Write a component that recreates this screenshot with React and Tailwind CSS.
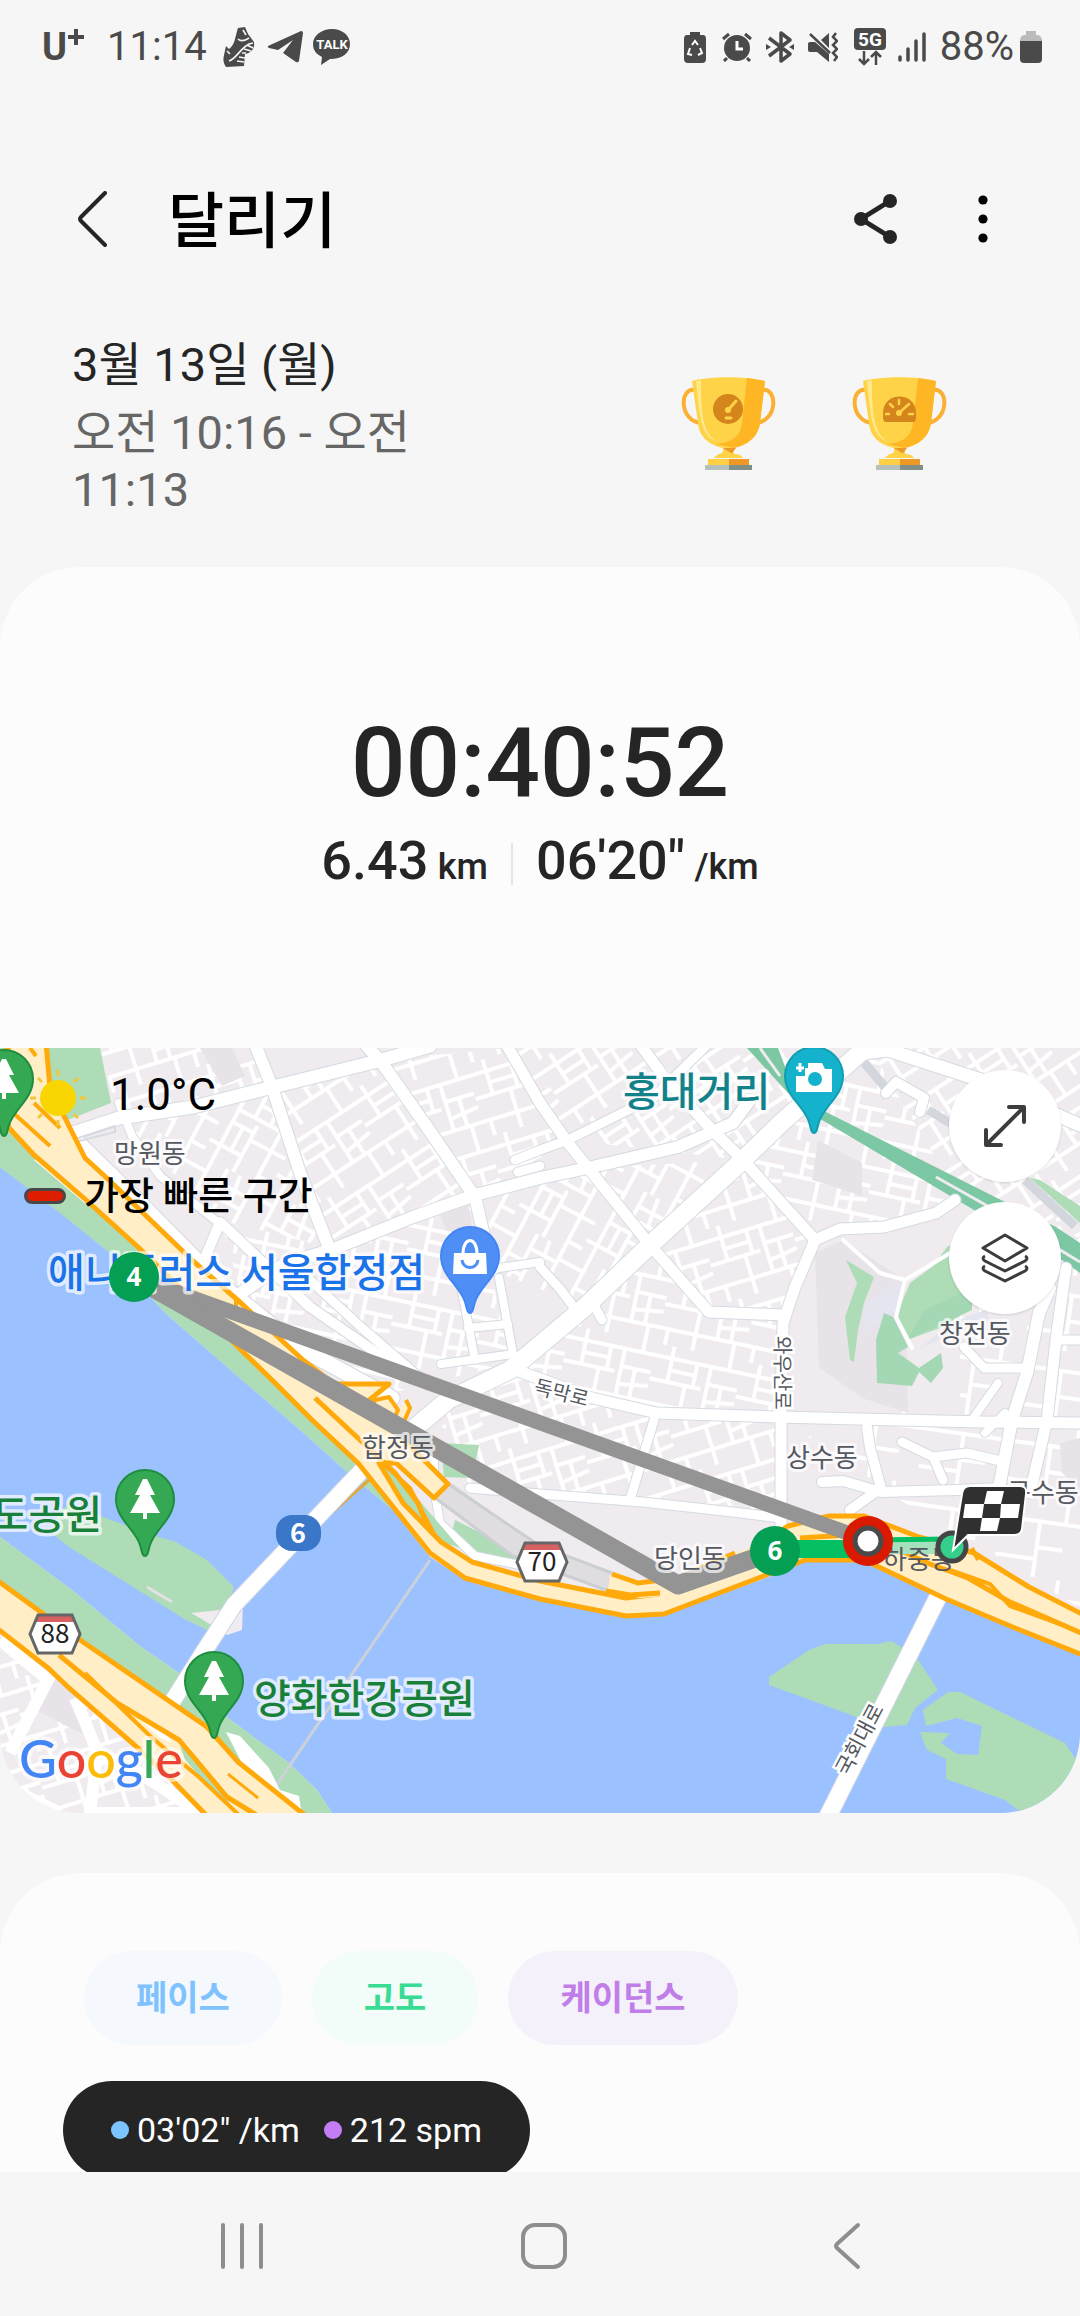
import React from "react";

const majorRoads = [
  { d: "M64 88L119 70L193 59L269 40L382 12L430 -2", w: 13 },
  { d: "M119 55L132 88L160 128L215 172", w: 8 },
  { d: "M255 -4L272 39L300 125L331 205", w: 12 },
  { d: "M365 -4L382 15L427 79L475 149L492 222", w: 12 },
  { d: "M241 245L286 215L331 202L413 169L475 147L540 130L588 120L678 99L733 75L750 52", w: 12 },
  { d: "M69 86L145 160L220 236L300 300L392 350", w: 15 },
  { d: "M205 210L220 174L310 259L413 330", w: 10 },
  { d: "M286 210L362 280L420 330", w: 9 },
  { d: "M870 -4L781 75L743 112L650 197L585 259L510 322L448 352L362 424", w: 18 },
  { d: "M515 112L540 102L568 92L654 49L708 -4", w: 9 },
  { d: "M505 -6L540 55L568 95L650 197L709 264L784 267", w: 11 },
  { d: "M640 -4L664 29L712 82L743 112L815 192L795 239L783 275L781 359L781 478", w: 11 },
  { d: "M815 192L840 181L884 179L936 165L955 152", w: 11 },
  { d: "M510 320L592 350L657 365L778 369L981 374L1080 375", w: 11 },
  { d: "M540 219L561 242L578 265", w: 9 },
  { d: "M864 5L888 2L981 32L1040 60L1080 77", w: 13 },
  { d: "M964 299L984 320L1024 320", w: 9 },
  { d: "M1050 240L1039 265L1027 325L1012 372L998 445", w: 12 },
  { d: "M1066 220L1056 292L1047 372L1030 445", w: 11 },
  { d: "M1056 292L1084 292", w: 9 },
  { d: "M867 379L870 400L881 440L850 462", w: 10 },
  { d: "M822 434L843 433L881 444L957 442L1000 440", w: 10 },
  { d: "M902 394L933 409L967 405L1005 414M933 409L943 432", w: 9 },
  { d: "M470 440L540 446L643 454L733 464L781 470", w: 9 },
  { d: "M654 372L630 452", w: 9 },
  { d: "M441 316L513 306M458 222L475 312M499 230L513 306M468 280L508 276M458 226L540 214", w: 8 },
  { d: "M434 410L434 440L440 475L475 508L520 517", w: 8 },
  { d: "M1005 365L985 385M998 335L972 372", w: 8 },
  { d: "M590 250L602 272M518 124L540 118", w: 9 },
];

// each district has its own street direction
const districts = [
  { points: "100,0 255,0 272,39 119,70", pattern: "url(#streetsA)" },
  { points: "119,70 272,39 331,200 220,172", pattern: "url(#streetsB)" },
  { points: "272,39 382,12 475,149 331,200", pattern: "url(#streetsD)" },
  { points: "382,12 510,0 568,92 475,149", pattern: "url(#streetsA)" },
  { points: "220,172 331,200 475,149 510,315 392,345 241,245", pattern: "url(#streetsC)" },
  { points: "475,149 588,120 650,197 585,259 492,222", pattern: "url(#streetsB)" },
  { points: "510,0 870,0 743,112 568,92", pattern: "url(#streetsD)" },
  { points: "588,120 743,112 650,197", pattern: "url(#streetsB)" },
  { points: "743,112 650,197 709,264 784,267 815,192", pattern: "url(#streetsA)" },
  { points: "743,112 781,75 870,0 960,152 815,192", pattern: "url(#streetsC)" },
  { points: "870,0 1080,0 1080,190 960,150", pattern: "url(#streetsD)" },
  { points: "585,259 650,197 709,264 784,267 781,369 657,365 510,320", pattern: "url(#streetsC)" },
  { points: "434,360 510,320 657,365 781,369 781,470 470,440", pattern: "url(#streetsA)" },
  { points: "960,230 1080,190 1080,560 880,440 781,369 960,360", pattern: "url(#streetsE)" },
  { points: "0,590 70,640 230,765 0,765", pattern: "url(#streetsA)" },
];

const placeLabels = [
  { text: "망원동", x: 114, y: 115 },
  { text: "상수동", x: 786, y: 419 },
  { text: "구수동", x: 1007, y: 454 },
  { text: "창전동", x: 939, y: 295 },
  { text: "합정동", x: 362, y: 409 },
  { text: "당인동", x: 654, y: 520 },
];

const StreetPattern = ({ id, angle, dense }) => (
  <pattern id={id} width="88" height="76" patternUnits="userSpaceOnUse" patternTransform={`rotate(${angle})`}>
    <path
      d={
        dense
          ? "M0 12H88M0 36H52M0 60H88M18 0V36M58 12V60M76 60V76M36 36V76M76 0V12M58 30H88M8 60V76M44 12V36M72 30V60M18 24H44M58 48L88 44"
          : "M0 20H88M40 20V76M0 58H40M66 0V20M66 46H40"
      }
      fill="none"
      stroke="#fff"
      strokeWidth="4"
    />
  </pattern>
);

const Pin = ({ x, y, fill, edge, children }) => (
  <g transform={`translate(${x} ${y})`}>
    <path
      d="M0 57C-3 57 -3 52 -5 46C-10 30 -29 20 -29 0A29 29 0 0 1 29 0C29 20 10 30 5 46C3 52 3 57 0 57Z"
      fill={fill}
      stroke={edge}
      strokeWidth="2"
    />
    {children}
  </g>
);

const Tree = () => (
  <path d="M-2 -20H2L10 -4H5L15 14H2V20H-2V14H-15L-5 -4H-10Z" fill="#fff" />
);

const RoadShield = ({ x, y, number }) => (
  <g transform={`translate(${x} ${y})`}>
    <path d="M-17 -19H17L25 0L17 19H-17L-25 0Z" fill="#fff" />
    <path d="M-17 -19H17L20 -12H-20Z" fill="#d96161" />
    <path d="M-17 -19H17L25 0L17 19H-17L-25 0Z" fill="none" stroke="#666" strokeWidth="3" />
    <text y="9" textAnchor="middle" fontSize="26" fill="#222" className="font-['Noto_Sans_CJK_KR',sans-serif]">
      {number}
    </text>
  </g>
);

const KmMarker = ({ x, y, number }) => (
  <g>
    <circle cx={x} cy={y} r="25" fill="#049f53" />
    <text x={x} y={y + 9} textAnchor="middle" fontSize="26" fontWeight="700" fill="#fff" className="font-['Open_Sans',sans-serif]">
      {number}
    </text>
  </g>
);

const RouteMap = () => (
  <svg viewBox="0 0 1080 765" className="block w-full font-['Noto_Sans_CJK_KR',sans-serif]" aria-label="달리기 경로">
    <defs>
      <StreetPattern id="streetsA" angle={-17} dense />
      <StreetPattern id="streetsB" angle={-62} dense />
      <StreetPattern id="streetsC" angle={12} dense />
      <StreetPattern id="streetsD" angle={-33} dense />
      <StreetPattern id="streetsE" angle={8} />
    </defs>
    <rect width="1080" height="765" fill="#efebef" />
    {districts.map((item) => (
      <polygon key={item.points} points={item.points} fill={item.pattern} />
    ))}

    {/* city blocks */}
    <g fill="#e8e3e8">
      <path d="M200 0L232 0L245 28L222 38Z" />
      <path d="M818 92L862 115L862 148L812 132Z" />
      <path d="M815 205L843 192L905 232L908 365L862 350L819 319Z" />
      <path d="M440 165L468 155L474 188L446 182Z" />
      <path d="M1060 395L1080 390V440L1062 425Z" />
      <path d="M48 625L72 640L95 690L70 680L36 662Z" />
    </g>
    <path d="M885 240L905 236L900 262L862 285L866 255Z M950 275L985 262L990 270L920 300Z" fill="#e4e5ee" />
    <g fill="#addcb7">
      <path d="M846 212L874 229L864 255L858 282L854 314L850 312L845 269L857 235Z" />
      <path d="M948 198L932 219L910 235L896 269L907 292L945 278L972 259L975 200Z" />
      <path d="M441 395L479 397L472 430L444 429Z" />
      <path d="M455 472L517 503L520 516L480 514L451 488Z" />
      <path d="M1030 130L1080 175V158L1040 132Z" />
    </g>
    <path
      d="M884 265L893 269L908 299L898 305L919 320L941 305L943 320L931 335L919 324L912 338L877 335L876 292Z M925 262L972 240V262L907 292Z"
      fill="#a4d7b4"
    />
    <path d="M862 12L890 45M928 62L955 78M1025 132L1075 178" stroke="#d3d6dc" strokeWidth="9" />

    {/* railway park */}
    <path
      d="M747 0H778L790 32L826 64L1005 154L1056 179L1080 195V225L1062 212L974 162L822 72L788 45Z"
      fill="#7cc8a4"
    />
    <path d="M760 0L780 28M936 129L984 156L1080 214" stroke="#efebef" strokeWidth="3" fill="none" />

    {/* streets: casing first, then the white surface */}
    <g fill="none" strokeLinejoin="round" strokeLinecap="round">
      {majorRoads.map((road) => (
        <path key={road.d} d={road.d} stroke="#d6dae2" strokeWidth={road.w + 2} />
      ))}
      {majorRoads.map((road) => (
        <path key={road.d} d={road.d} stroke="#fff" strokeWidth={road.w} />
      ))}
      <path d="M905 232L896 269L912 300M905 232L932 216L950 205M843 192L880 225L905 232" stroke="#fff" strokeWidth="4" />
      <path d="M886 45L896 34L924 50L920 64" stroke="#d6dae2" strokeWidth="12" />
      <path d="M886 45L896 34L924 50L920 64" stroke="#fff" strokeWidth="10" />
      <path d="M72 92L115 78V84L75 94Z" stroke="#d6dae2" strokeWidth="2" />
    </g>

    {/* Han river and its parks */}
    <path
      d="M0 0H100L111 55L60 75L120 150L400 430L460 500L400 480L393 462L348 425L300 382L227 319L165 265L110 205L0 119Z"
      fill="#addcb7"
    />
    <path
      d="M0 119L60 165L110 205L165 265L227 319L300 382L348 425L393 462L430 509L465 532L540 550L626 568L664 567L774 527L802 514L864 512L946 552L1015 582L1080 605V765H332L317 742L289 715L224 667L179 625L141 599L72 542L0 489Z"
      fill="#9cc1ff"
    />
    <path d="M0 489L72 542L141 599L179 625L224 667L289 715L317 742L332 765H250L0 560Z" fill="#addcb7" />
    <path
      d="M52 485L59 462L72 456L103 469L152 487L176 494L207 512L234 539L225 565L207 582L186 572L138 542L69 499Z"
      fill="#addcb7"
    />
    <path d="M191 565L220 562L243 556L242 582L227 587L200 570Z" fill="#efebef" />
    <path d="M147 539L172 554" stroke="#e4e1e5" strokeWidth="3" />
    <path
      d="M769 629L809 602L826 596H877L891 593L915 607L938 642L915 660L907 677L884 679L802 649L769 637Z"
      fill="#addcb7"
    />
    <path
      d="M948 644H960L1065 695L1080 718V765H1022L1005 752L946 731V711L927 702L920 684L950 685L941 695L957 706L978 707L982 678L957 670L926 678L923 662Z"
      fill="#addcb7"
    />
    <path d="M34 112L88 158L82 142L38 110Z" fill="#fff" />

    {/* bridges */}
    <path d="M430 512L275 739" stroke="#cdd1d9" strokeWidth="3" />
    <path d="M369 432L320 475" stroke="#e0a93c" strokeWidth="3" />
    <g fill="none">
      <path d="M366 418L234 557L203 605L172 654" stroke="#cfd6e4" strokeWidth="18" />
      <path d="M366 418L234 557L203 605L172 654" stroke="#fff" strokeWidth="16" />
      <path d="M940 545L826 772" stroke="#cfd6e4" strokeWidth="19" />
      <path d="M940 545L826 772" stroke="#fff" strokeWidth="17" />
    </g>

    {/* southern expressway */}
    <path d="M226 684L240 688L269 720L280 742L299 748L302 768L260 750Z" fill="#fff" />
    <path d="M0 592L48 632L10 705M75 650L98 705L140 725L200 765H90L98 700M0 735L60 765" stroke="#fff" strokeWidth="12" fill="none" />
    <path
      d="M-6 530L38 562L83 594L207 679L238 714L306 768H207L172 732L138 700L69 640L48 620L-6 578Z"
      fill="#ffeec6"
      stroke="#ffa90a"
      strokeWidth="5"
    />
    <path d="M178 690L188 702L226 749L232 760L205 735L184 710Z" fill="#addcb7" />
    <path d="M130 662L165 684L172 695L160 690Z" fill="#fff" />
    <g fill="none" stroke="#ffa90a">
      <path d="M59 607L117 655L179 692L227 749L258 768" strokeWidth="5" />
      <path d="M85 625L150 688L200 730L240 768" strokeWidth="4" />
      <path d="M228 726L258 750" strokeWidth="3" />
    </g>

    {/* tunnel section */}
    <path d="M440 430L455 437L540 500L612 525L608 543L540 520L513 509L434 448Z" fill="#e0dde1" />
    <path d="M448 436L540 498L612 525M434 449L513 508L606 542" stroke="#cbced2" strokeWidth="3" fill="none" />

    {/* northern expressway */}
    <g fill="#ffeec6" stroke="#ffa90a" strokeWidth="5" strokeLinejoin="round">
      <path d="M334 336H389L378 345L362 358Z" />
      <path d="M406 352L410 360L402 378L388 392L368 372L375 352L389 349L398 362L392 376" strokeWidth="4" />
      <path d="M-6 20L12 -6H46L50 40L85 110L110 133L193 213L241 255L303 312L352 350L400 388L448 436L434 450L396 415L379 415L403 455L441 494L472 514L540 533L626 550L658 546L742 508L788 478L829 468H864L919 489L974 505L1029 539L1088 569V609L1015 580L946 551L864 512H805L774 524L664 566L626 568L540 551L465 530L430 505L358 415L312 372L275 335L234 295L189 249L138 199L86 152L34 107L9 80Z" />
    </g>
    <path d="M610 527L638 535L678 530L733 505L752 500L700 545L640 550L608 543Z" fill="#ffeec6" />
    <g fill="none" stroke="#ffa90a">
      <path d="M612 526L638 535L678 530L735 505M606 543L630 547L660 545" strokeWidth="5" />
      <path d="M315 350L360 392L395 425L418 455L428 480" strokeWidth="5" />
      <path d="M379 412L410 440L434 486" strokeWidth="4" />
      <path d="M800 490L864 486L930 516L968 530L1008 553L1088 588" strokeWidth="5" />
      <path d="M950 522L990 536L1010 558L1060 576M972 500L978 512" strokeWidth="4" />
      <path d="M10 62L50 98M34 55L60 80M30 0L36 8" strokeWidth="4" />
      <path d="M236 252V262" strokeWidth="4" />
    </g>

    {/* recorded track */}
    <g fill="none" strokeLinejoin="round">
      <path d="M134 229L867 492" stroke="#949494" strokeWidth="15" />
      <path d="M134 229L678 537L775 503" stroke="#949494" strokeWidth="19" />
      <path d="M775 501H867" stroke="#05bf63" strokeWidth="18" />
      <path d="M867 498H952" stroke="#a5e1bc" strokeWidth="16" />
      <path d="M867 492L952 491" stroke="#05bf63" strokeWidth="5" />
    </g>

    {/* labels */}
    <g fontSize="26" fill="#55595f" stroke="#fff" strokeOpacity="0.7" strokeWidth="6" strokeLinejoin="round">
      {placeLabels.map((label) => (
        <text key={label.text} x={label.x} y={label.y} style={{ paintOrder: "stroke" }}>
          {label.text}
        </text>
      ))}
    </g>
    <text x="883" y="521" fontSize="26" fill="#55595f">하중동</text>
    <g fontSize="20" fill="#55595f" stroke="#fff" strokeWidth="5">
      <text transform="translate(775 288) rotate(90)" style={{ paintOrder: "stroke" }}>와우산로</text>
      <text transform="translate(533 345) rotate(14)" style={{ paintOrder: "stroke" }}>독막로</text>
      <text transform="translate(848 729) rotate(-62)" fontSize="21" style={{ paintOrder: "stroke" }}>국회대로</text>
    </g>
    <g fontSize="40" fontWeight="500" stroke="#fff" strokeOpacity="0.7" strokeWidth="7" strokeLinejoin="round">
      <text x="48" y="239" fill="#1a73e8" style={{ paintOrder: "stroke" }}>애니플러스 서울합정점</text>
      <text x="623" y="58" fill="#11828a" style={{ paintOrder: "stroke" }}>홍대거리</text>
      <text x="102" y="481" textAnchor="end" fill="#188038" style={{ paintOrder: "stroke" }}>선유도공원</text>
      <text x="254" y="665" fill="#188038" style={{ paintOrder: "stroke" }}>양화한강공원</text>
    </g>

    <Pin x={4} y={31} fill="#34a853" edge="#1e8e3e"><Tree /></Pin>
    <Pin x={145} y={451} fill="#34a853" edge="#1e8e3e"><Tree /></Pin>
    <Pin x={214} y={633} fill="#34a853" edge="#1e8e3e"><Tree /></Pin>
    <Pin x={470} y={208} fill="#4f8ff5" edge="#4285f4">
      <path d="M-16 -3H16L17 18H-17Z" fill="#fff" />
      <path d="M-7 -2C-7 -20 7 -20 7 -2" fill="none" stroke="#fff" strokeWidth="3" />
      <path d="M-8 4C-7 14 7 14 8 4" fill="none" stroke="#4f8ff5" strokeWidth="3" />
    </Pin>
    <Pin x={814} y={28} fill="#14b2cc" edge="#129eaf">
      <path d="M-6 -8V-13H8L11 -7H18V16H-18V0H-9V-8Z" fill="#fff" />
      <path d="M-14 -13V-4M-18 -8H-10" stroke="#fff" strokeWidth="3" />
      <circle cx="1" cy="3" r="7" fill="#14b2cc" />
    </Pin>

    <RoadShield x={55} y={586} number="88" />
    <RoadShield x={542} y={514} number="70" />
    <rect x="276" y="467" width="45" height="36" rx="16" fill="#3a77c8" />
    <text x="298" y="495" textAnchor="middle" fontSize="27" fontWeight="700" fill="#fff">6</text>

    {/* track markers */}
    <KmMarker x={134} y={229} number="4" />
    <KmMarker x={775} y={503} number="6" />
    <circle cx="868" cy="493" r="25" fill="#d91a00" />
    <circle cx="868" cy="493" r="13" fill="#fff" stroke="#4a4a4a" strokeWidth="5" />
    <circle cx="952" cy="499" r="14" fill="#34cf8d" stroke="#454545" strokeWidth="5" />
    <path
      d="M970 438H1020Q1027 438 1026 446L1022 481Q1021 487 1014 487H968L953 502L962 446Q963 438 970 438Z"
      fill="#303030"
      stroke="#fff"
      strokeWidth="2"
    />
    <path
      d="M987 443H1004L1001 456H984ZM965 456H984L982 470H963ZM1001 456H1020L1018 470H1000ZM982 470H1000L997 483H980Z"
      fill="#fff"
    />

    <text
      x="19"
      y="730"
      fontSize="52"
      fontWeight="500"
      stroke="#fff"
      strokeOpacity="0.6"
      strokeWidth="8"
      strokeLinejoin="round"
      className="font-[Lato,sans-serif]"
      style={{ paintOrder: "stroke" }}
    >
      <tspan fill="#4285f4">G</tspan>
      <tspan fill="#ea4335">o</tspan>
      <tspan fill="#fbbc05">o</tspan>
      <tspan fill="#4285f4">g</tspan>
      <tspan fill="#34a853">l</tspan>
      <tspan fill="#ea4335">e</tspan>
    </text>
  </svg>
);

const StatusBar = () => (
  <div className="flex h-[94px] shrink-0 items-center justify-between pr-[38px] pl-[42px] text-[40px] leading-none text-[#4a4a4a]">
    <div className="flex items-center">
      <span className="flex w-[65px] items-start text-[38px] font-bold">
        U
        <svg viewBox="0 0 18 18" className="size-[18px]">
          <path d="M9 1V17M1 9H17" stroke="currentColor" strokeWidth="4" />
        </svg>
      </span>
      <span>11:14</span>
      <svg viewBox="0 0 32 40" className="ml-4 h-10 w-8">
        <path d="M15 1L22 0L25 7L31 15C32 22 28 26 22 27L21 39L3 40C0 36 0 32 1 28L3 19L6 22C12 18 12 10 15 1Z" fill="#4a4a4a" />
        <path d="M15 12C18 15 23 13 26 11M6 34C14 32 19 17 30 16M4 24L7 27M16 30L22 31M14 34L21 35M19 26L23 26M21 22L28 24M24 18L30 21M20 3L23 8" stroke="#f6f6f6" strokeWidth="1.6" fill="none" />
      </svg>
      <svg viewBox="0 0 36 32" className="ml-3 h-8 w-9">
        <path d="M1 15L34 0Q36 0 36 2L32 30Q31 32 29 31L16 22L26 9L11 19L2 17Q0 16 1 15Z" fill="#4a4a4a" />
      </svg>
      <svg viewBox="0 0 38 36" className="ml-2.5 h-9 w-[38px]">
        <path d="M19 0C30 0 37 7 37 15C37 24 29 30 17 30L8 36L9 28C3 25 0 21 0 15C0 7 8 0 19 0Z" fill="#4a4a4a" />
        <text x="19" y="20" textAnchor="middle" fontSize="13" fontWeight="700" fill="#fff">TALK</text>
      </svg>
    </div>
    <div className="flex items-center">
      <svg viewBox="0 0 22 32" className="h-8 w-[22px]">
        <path d="M6 1H16V4H19Q22 4 22 8V28Q22 32 18 32H4Q0 32 0 28V8Q0 4 3 4H6Z" fill="#4a4a4a" />
        <path d="M8 14L11 10L14 14M16 17L18 22L14 24M8 24L4 23L6 17" stroke="#fff" strokeWidth="2" fill="none" />
      </svg>
      <svg viewBox="0 0 30 30" className="ml-4 size-[30px]">
        <circle cx="15" cy="16" r="13" fill="#4a4a4a" />
        <path d="M1 7L7 2M29 7L23 2M5 26L2 29M25 26L28 29" stroke="#4a4a4a" strokeWidth="3" />
        <path d="M15 9V17H21" stroke="#fff" strokeWidth="3" fill="none" />
      </svg>
      <svg viewBox="0 0 28 32" className="ml-3.5 h-8 w-7">
        <path d="M3 7L24 23L15 30V2L24 9L3 25" stroke="#4a4a4a" strokeWidth="3.5" fill="none" strokeLinejoin="round" />
        <path d="M0 13L5 16L0 19ZM28 13L23 16L28 19Z" fill="#4a4a4a" />
      </svg>
      <svg viewBox="0 0 30 30" className="ml-3.5 size-[30px]">
        <path d="M0 12Q0 10 2 10H7L21 22V30L9 20H2Q0 20 0 18ZM21 1V16L13 8Z" fill="#4a4a4a" />
        <path d="M2 2L22 21" stroke="#4a4a4a" strokeWidth="2.5" />
        <path d="M28 1L25 5L29 9L25 13L29 17L25 21L29 25L26 29" stroke="#4a4a4a" strokeWidth="2.5" fill="none" />
      </svg>
      <svg viewBox="0 0 32 38" className="ml-4 h-[38px] w-8">
        <rect width="32" height="22" rx="4" fill="#4a4a4a" />
        <text x="16" y="18" textAnchor="middle" fontSize="19" fontWeight="700" fill="#fff">5G</text>
        <path d="M10 23V36M5 31L10 36L15 31M22 37V24M17 29L22 24L27 29" stroke="#4a4a4a" strokeWidth="2.5" fill="none" />
      </svg>
      <svg viewBox="0 0 28 30" className="ml-3 h-[30px] w-7">
        <path d="M2 25V28M10 17V28M18 9V28M26 2V28" stroke="#4a4a4a" strokeWidth="3.5" strokeLinecap="round" />
      </svg>
      <span className="ml-3.5">88%</span>
      <svg viewBox="0 0 22 32" className="ml-1.5 h-8 w-[22px]">
        <path d="M6 0H16V4H18Q22 5 22 10H0Q0 5 4 4H6Z" fill="#bbb" />
        <path d="M0 10H22V28Q22 32 18 32H4Q0 32 0 28Z" fill="#4a4a4a" />
      </svg>
    </div>
  </div>
);

const Trophy = ({ children }) => (
  <svg viewBox="0 0 95 93" className="h-[93px] w-[95px]">
    <path d="M14 13C-2 10 -2 44 20 46M81 13C97 10 97 44 75 46" fill="none" stroke="#fbb034" strokeWidth="4" />
    <path d="M11 4C30 -1 65 -1 84 4L79 46C77 62 63 69 53 71V78H42V71C32 69 18 62 17 46Z" fill="#ffd348" />
    <path d="M66 1L84 4L79 46C77 62 63 69 53 71L35 67C52 66 60 58 61 45Z" fill="#ffb624" />
    <path d="M15 4L20 3C20 30 20 55 36 65C20 58 19 44 15 4Z" fill="#ffe88a" />
    <path d="M42 71H55L51 76L53 78Z" fill="#ec9a26" />
    <path d="M33 81C36 76 43 77 43 73C50 78 60 76 62 81Z" fill="#ffd348" />
    <path d="M27 82H48V88H27Z" fill="#ffcf45" />
    <path d="M48 82H68V88H48Z" fill="#ee9827" />
    <path d="M24 88H48V93H24Z" fill="#b5c1ba" />
    <path d="M48 88H71V93H48Z" fill="#828f86" />
    {children}
  </svg>
);

const DataDot = ({ className }) => <span className={`size-[18px] rounded-full ${className}`} />;

const App = () => {
  return (
    <div className="flex h-screen flex-col overflow-hidden bg-[#f6f6f6] font-[Roboto,'Noto_Sans_CJK_KR',sans-serif] text-[#252525]">
      <StatusBar />

      <main className="flex min-h-0 flex-1 flex-col overflow-hidden">
        <header className="mt-[77px] flex h-24 shrink-0 items-center justify-between pr-[70px] pl-[70px]">
          <div className="flex items-center gap-[60px]">
            <button aria-label="뒤로" className="pl-2">
              <svg viewBox="0 0 30 56" className="h-14 w-[30px]">
                <path d="M27 2L3 26Q1 28 3 30L27 54" fill="none" stroke="#252525" strokeWidth="4" strokeLinecap="round" />
              </svg>
            </button>
            <h1 className="pt-1.5 text-[61px] leading-none font-medium text-black">달리기</h1>
          </div>
          <div className="flex items-center gap-[58px]">
            <button aria-label="공유">
              <svg viewBox="0 0 44 50" className="h-[50px] w-11">
                <path d="M36 7L7 25L36 43" fill="none" stroke="#252525" strokeWidth="5" />
                <circle cx="36" cy="7" r="7" fill="#252525" />
                <circle cx="7" cy="25" r="7" fill="#252525" />
                <circle cx="36" cy="43" r="7" fill="#252525" />
              </svg>
            </button>
            <button aria-label="더보기" className="grid w-[54px] place-items-center">
              <svg viewBox="0 0 10 48" className="h-12 w-2.5">
                <circle cx="5" cy="5" r="4.6" />
                <circle cx="5" cy="24" r="4.6" />
                <circle cx="5" cy="43" r="4.6" />
              </svg>
            </button>
          </div>
        </header>

        <section className="mt-[67px] flex shrink-0 items-start justify-between pr-[133px] pl-[72px] text-[47px] leading-[57px]">
          <div className="w-[360px] pt-0.5">
            <p>3월 13일 (월)</p>
            <p className="mt-[11px] text-[#666]">오전 10:16 - 오전 11:13</p>
          </div>
          <div className="mt-[43px] flex gap-[76px]">
            <Trophy>
              <circle cx="47" cy="32" r="15" fill="#d4851c" />
              <path d="M47 33L55 24M45 41H50" stroke="#ffd348" strokeWidth="3" strokeLinecap="round" />
              <circle cx="47" cy="33" r="3" fill="#ffd348" />
            </Trophy>
            <Trophy>
              <path d="M34 45Q31 45 31 40V36C31 14 64 14 64 36V40Q64 45 61 45Z" fill="#d4851c" />
              <path d="M47 36L57 27M47 23V27M38 27L41 30M34 37H37M57 37H61" stroke="#ffd348" strokeWidth="2.5" strokeLinecap="round" />
              <circle cx="47" cy="36" r="3" fill="#ffd348" />
            </Trophy>
          </div>
        </section>

        <section className="mt-[49px] shrink-0 overflow-hidden rounded-[80px] bg-[#fcfcfc]">
          <div className="flex flex-col items-center pt-[148px] pb-[150px] font-medium">
            <p className="text-[96px] leading-none">00:40:52</p>
            <div className="mt-[18px] flex h-[69px] items-center text-[54px] leading-[64px]">
              <p>
                6.43 <span className="-ml-1 text-[36px]">km</span>
              </p>
              <span className="mx-[23px] h-[42px] w-0.5 bg-[#e5e5e5]" />
              <p>
                06'20" <span className="-ml-1 text-[36px]">/km</span>
              </p>
            </div>
          </div>

          <div className="relative">
            <RouteMap />
            <div className="absolute top-5 left-6 text-black">
              <div className="flex items-start">
                <svg viewBox="0 0 60 60" className="ml-1 size-[60px]">
                  <circle cx="30" cy="30" r="18" fill="#f9d602" />
                  <path d="M30 2V8M30 52V58M2 30H8M52 30H58M10 10L14 14M46 46L50 50M10 50L14 46M46 14L50 10" stroke="#f2c83a" strokeWidth="3" />
                </svg>
                <span className="ml-[22px] text-[44px] leading-[54px]">1.0°C</span>
              </div>
              <div className="mt-10 flex items-center">
                <span className="h-4 w-[42px] rounded-full border-3 border-[#484848] bg-[#dd1c00]" />
                <span className="ml-[18px] text-[38px] leading-[56px] font-medium">가장 빠른 구간</span>
              </div>
            </div>
            <div className="absolute top-[22px] right-[19px] flex flex-col gap-5">
              <button aria-label="지도 확대" className="grid size-28 place-items-center rounded-full bg-white shadow-sm">
                <svg viewBox="0 0 44 44" className="size-11">
                  <path d="M4 40L40 4M26 3H41V18M3 26V41H18" fill="none" stroke="#3c3c3c" strokeWidth="4" strokeLinecap="round" strokeLinejoin="round" />
                </svg>
              </button>
              <button aria-label="지도 레이어" className="grid size-28 place-items-center rounded-full bg-white shadow-sm">
                <svg viewBox="0 0 48 50" className="h-[50px] w-12">
                  <path
                    d="M24 2L46 15L24 28L2 15ZM4 23Q0 25 4 28L24 38L44 28Q48 25 44 23M4 33Q0 35 4 38L24 48L44 38Q48 35 44 33"
                    fill="none"
                    stroke="#3c3c3c"
                    strokeWidth="3"
                    strokeLinejoin="round"
                  />
                </svg>
              </button>
            </div>
          </div>
        </section>

        <section className="mt-[60px] flex-1 rounded-t-[80px] bg-[#fcfcfc] px-[63px] pt-[78px]">
          <div className="flex gap-[30px] pl-[21px] text-[34px] leading-[94px] font-bold">
            <button className="rounded-full bg-[#f5f9fd] px-[52px] text-[#7ec3ff]">페이스</button>
            <button className="rounded-full bg-[#f2fcf8] px-[52px] text-[#3adb95]">고도</button>
            <button className="rounded-full bg-[#f5f1fb] px-[52px] text-[#c07ee8]">케이던스</button>
          </div>
          <div className="mt-9 flex h-[98px] w-fit items-center rounded-full bg-[#252525] px-12 text-[34px] text-white">
            <DataDot className="bg-[#7cc4ff]" />
            <span className="ml-2">03'02" /km</span>
            <DataDot className="ml-6 bg-[#c47df5]" />
            <span className="ml-2">212 spm</span>
          </div>
        </section>
      </main>

      <nav className="z-10 grid h-36 shrink-0 grid-cols-3 bg-[#f6f6f6] pt-1 pr-[82px] pl-[91px]">
        <button aria-label="최근 앱" className="grid place-items-center">
          <svg viewBox="0 0 44 48" className="h-12 w-11">
            <path d="M3 3V45M22 3V45M41 3V45" stroke="#8e8e8e" strokeWidth="4" strokeLinecap="round" />
          </svg>
        </button>
        <button aria-label="홈" className="grid place-items-center">
          <svg viewBox="0 0 48 48" className="size-12">
            <rect x="3" y="3" width="42" height="42" rx="12" fill="none" stroke="#8e8e8e" strokeWidth="4" />
          </svg>
        </button>
        <button aria-label="이전" className="grid place-items-center">
          <svg viewBox="0 0 28 48" className="h-12 w-7">
            <path d="M25 3L4 22Q2 24 4 26L25 45" fill="none" stroke="#8e8e8e" strokeWidth="4" strokeLinecap="round" />
          </svg>
        </button>
      </nav>
    </div>
  );
};

export default App;
